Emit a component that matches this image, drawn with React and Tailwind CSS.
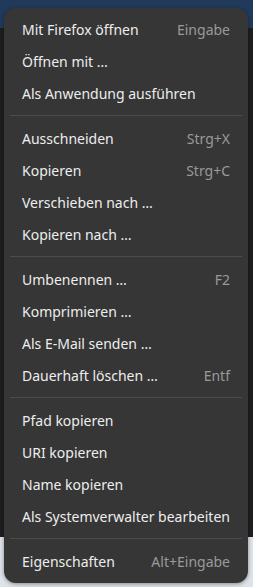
import React from "react";

const groups = [
  [
    ["Mit Firefox öffnen", "Eingabe"],
    ["Öffnen mit …", ""],
    ["Als Anwendung ausführen", ""],
  ],
  [
    ["Ausschneiden", "Strg+X"],
    ["Kopieren", "Strg+C"],
    ["Verschieben nach …", ""],
    ["Kopieren nach …", ""],
  ],
  [
    ["Umbenennen …", "F2"],
    ["Komprimieren …", ""],
    ["Als E-Mail senden …", ""],
    ["Dauerhaft löschen …", "Entf"],
  ],
  [
    ["Pfad kopieren", ""],
    ["URI kopieren", ""],
    ["Name kopieren", ""],
    ["Als Systemverwalter bearbeiten", ""],
  ],
  [["Eigenschaften", "Alt+Eingabe"]],
];

export default function App() {
  return (
    <div className="relative w-[253px] h-[587px] overflow-hidden bg-[#1e1e1e]" style={{ fontFamily: '"Noto Sans", sans-serif' }}>
      <div className="absolute left-0 top-0 w-full h-[28px] bg-[#213a5c]" />
      <div className="absolute left-0 top-[537px] w-full h-[50px] bg-[#dfe4ea]" />
      <div className="absolute left-[4px] top-[8px] w-[244px] h-[575px] rounded-[12px] bg-[#363636] pt-[5px] pb-[6px] px-[6px] flex flex-col shadow-[0_1px_4px_rgba(0,0,0,0.4)]">
        {groups.map((g, gi) => (
          <React.Fragment key={gi}>
            {gi > 0 && <div className="h-px bg-[#4c4c4c] my-[6px]" />}
            {g.map(([label, acc]) => (
              <div key={label} className="h-[32px] px-[12px] flex items-center justify-between text-[14px] text-[#ededed]">
                <span>{label}</span>
                {acc && <span className="text-[#9a9a9a]">{acc}</span>}
              </div>
            ))}
          </React.Fragment>
        ))}
      </div>
    </div>
  );
}
